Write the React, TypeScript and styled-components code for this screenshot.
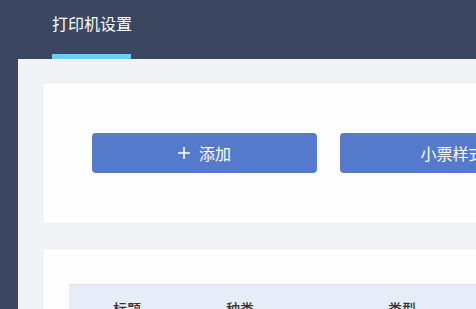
import React from "react";
import styled, { createGlobalStyle } from "styled-components";

const Global = createGlobalStyle`
  html, body { margin: 0; padding: 0; overflow: hidden; }
  body { font-family: "Noto Sans CJK SC", "Noto Sans", sans-serif; background: #3b4660; }
`;

const Page = styled.div`
  width: 476px;
  height: 309px;
  overflow: hidden;
  background: #3b4660;
  display: flex;
  flex-direction: column;
`;

const Header = styled.div`
  height: 59px;
  flex: none;
  display: flex;
  align-items: stretch;
  padding-left: 52px;
`;

const Tab = styled.div<{ $active?: boolean }>`
  width: 79px;
  display: flex;
  flex-direction: column;
  justify-content: space-between;
  color: #ffffff;
  font-size: 16px;
  line-height: 16px;
  padding-top: 15px;
  box-sizing: border-box;
  white-space: nowrap;
  &::after {
    content: "";
    display: block;
    height: 5px;
    background: ${(p) => (p.$active ? "#6dcbfd" : "transparent")};
  }
`;

const Body = styled.div`
  flex: 1;
  margin-left: 18px;
  width: 700px;
  background: #f2f3f7;
  padding: 23px 0 0 24px;
  display: flex;
  flex-direction: column;
  gap: 24px;
`;

const Card = styled.div<{ $height: number; $pt: number; $pl: number }>`
  width: 640px;
  height: ${(p) => p.$height}px;
  flex: none;
  box-sizing: border-box;
  background: #fdfdfd;
  border: 1px solid #ebedf2;
  border-radius: 4px;
  padding: ${(p) => p.$pt - 1}px 0 0 ${(p) => p.$pl - 1}px;
`;

const ButtonRow = styled.div`
  display: flex;
  gap: 23px;
`;

const Button = styled.button`
  width: 225px;
  height: 40px;
  border: none;
  border-radius: 4px;
  background: #5579cb;
  color: #ffffff;
  font-family: "Noto Sans CJK SC", "Noto Sans", sans-serif;
  font-size: 16px;
  display: flex;
  align-items: center;
  justify-content: center;
  gap: 9px;
  padding: 0;
`;

const PlusIcon = () => (
  <svg width="12" height="12" viewBox="0 0 12 12" fill="none" stroke="#fff" strokeWidth="1.6">
    <path d="M6 0v12M0 6h12" />
  </svg>
);

const TableHead = styled.div`
  display: flex;
  height: 48px;
  width: 600px;
  background: #e6edf8;
  border-top: 1px solid #d8dde8;
  box-sizing: border-box;
`;

const Th = styled.div<{ $w: number }>`
  width: ${(p) => p.$w}px;
  flex: none;
  text-align: center;
  font-size: 14px;
  font-weight: 500;
  color: #333333;
  padding-top: 13px;
  box-sizing: border-box;
`;

export default function App() {
  return (
    <>
      <Global />
      <Page>
        <Header>
          <Tab $active>打印机设置</Tab>
        </Header>
        <Body>
          <Card $height={142} $pt={51} $pl={50}>
            <ButtonRow>
              <Button>
                <PlusIcon />
                添加
              </Button>
              <Button>小票样式</Button>
            </ButtonRow>
          </Card>
          <Card $height={120} $pt={36} $pl={27}>
            <TableHead>
              <Th $w={116}>标题</Th>
              <Th $w={110}>种类</Th>
              <Th $w={214}>类型</Th>
            </TableHead>
          </Card>
        </Body>
      </Page>
    </>
  );
}
